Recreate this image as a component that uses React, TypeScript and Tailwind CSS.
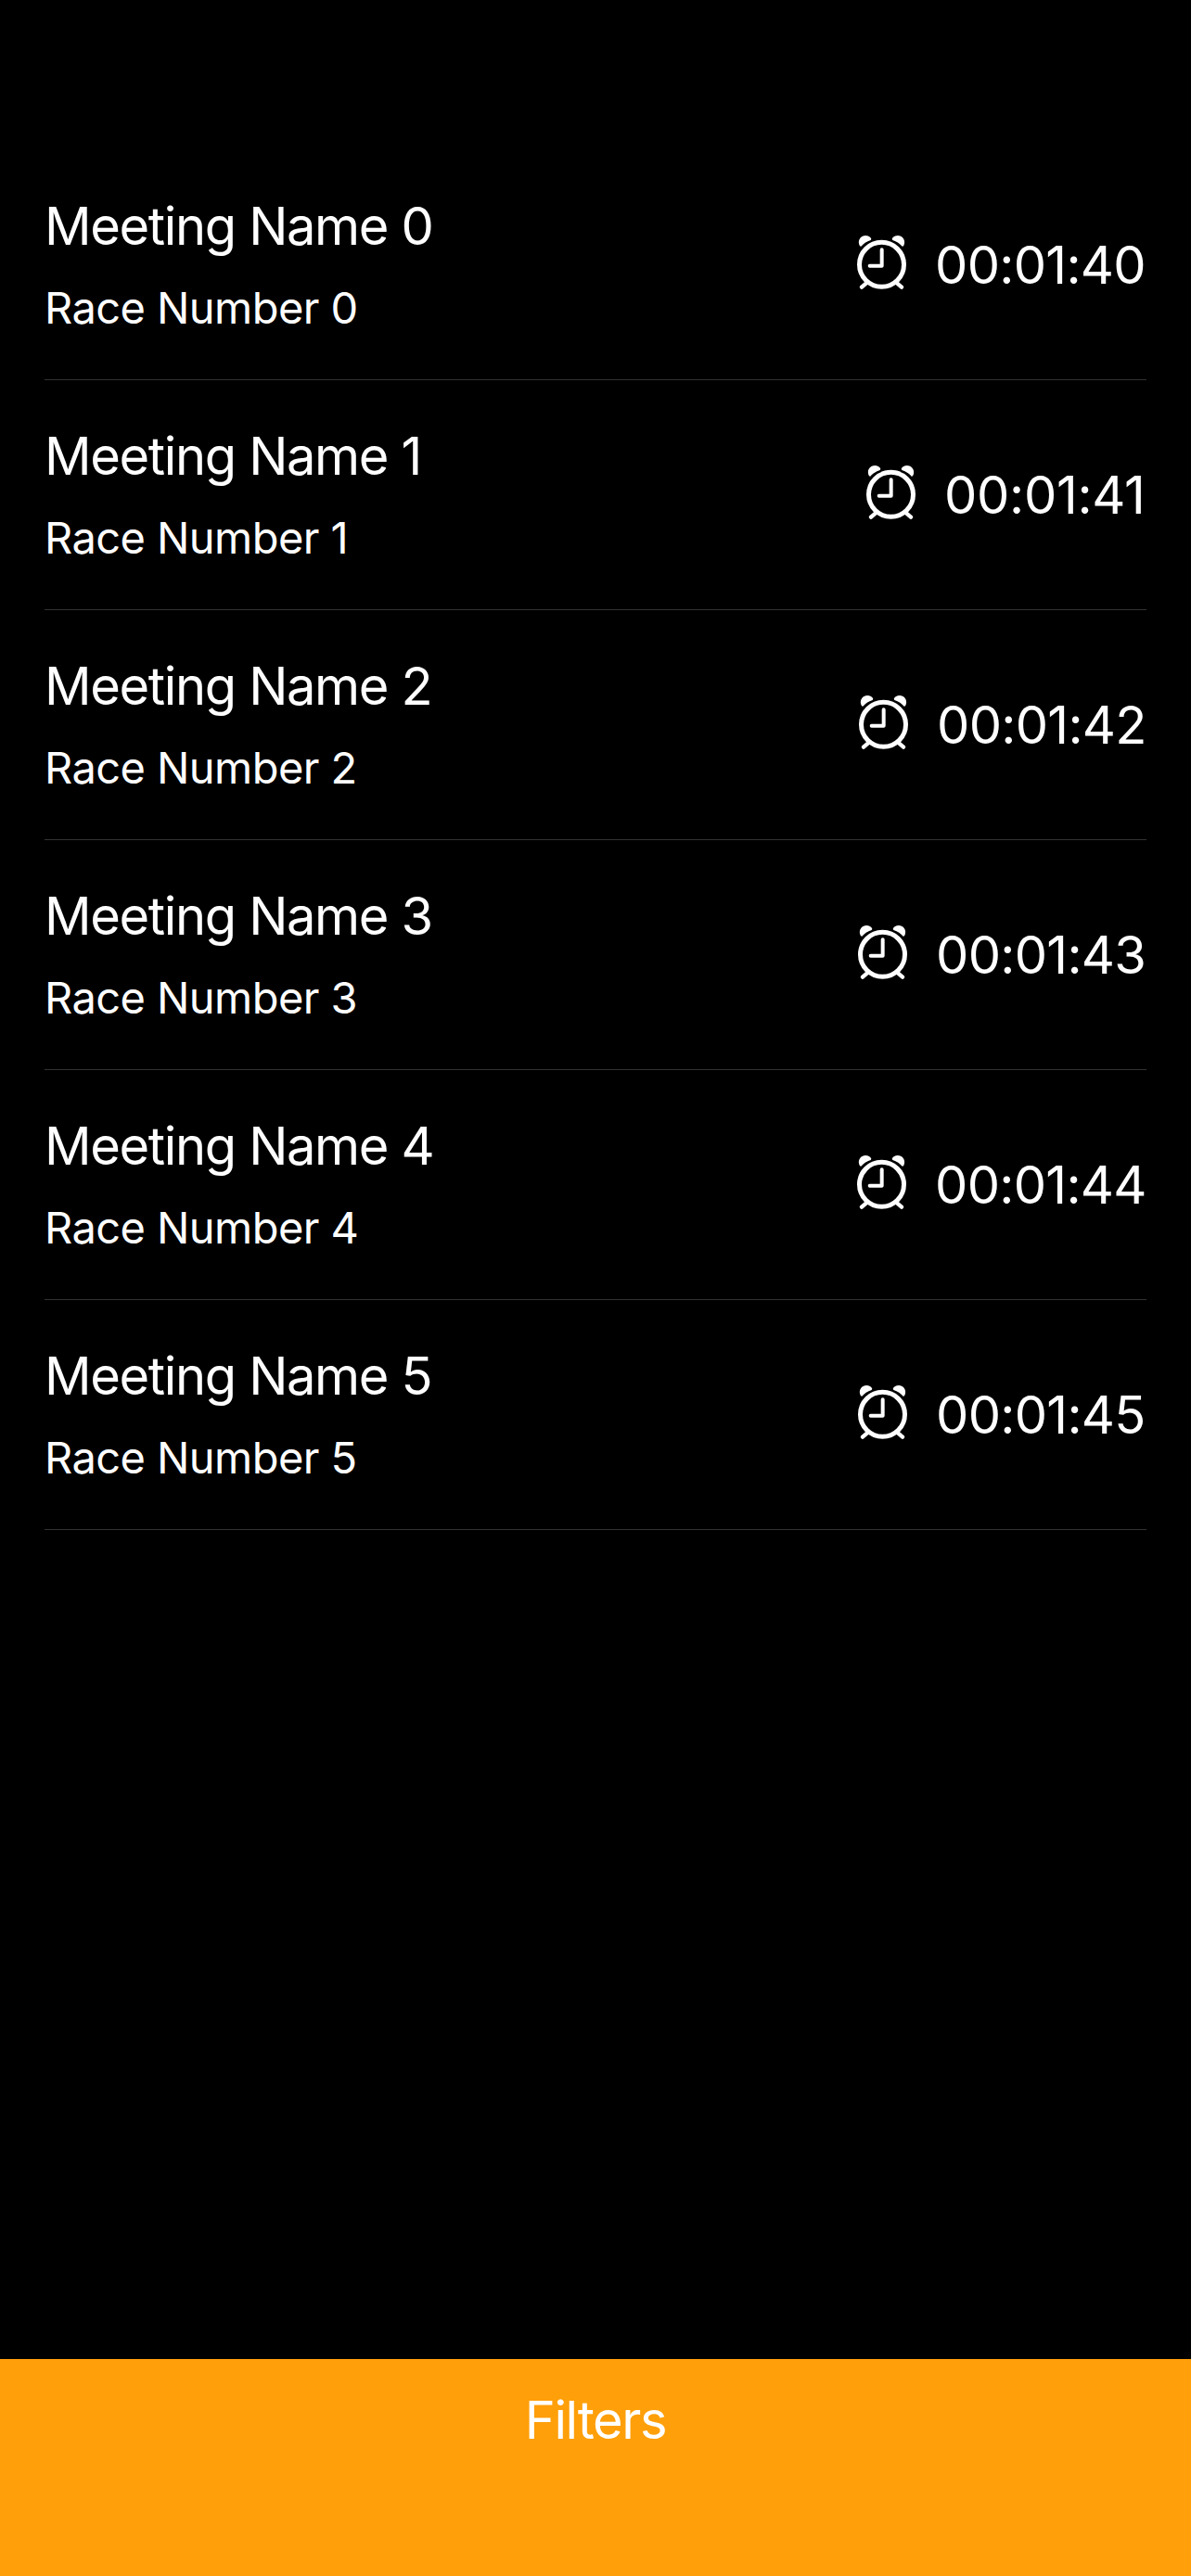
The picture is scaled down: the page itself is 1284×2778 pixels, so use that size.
const races = [
  { id: 0, time: "00:01:40", timeClass: "w-[228px] tracking-[-0.7px]" },
  { id: 1, time: "00:01:41", timeClass: "w-[218px] tracking-[-0.3px]" },
  { id: 2, time: "00:01:42", timeClass: "w-[226px] tracking-[-0.7px]" },
  { id: 3, time: "00:01:43", timeClass: "w-[227px] tracking-[-0.7px]" },
  { id: 4, time: "00:01:44", timeClass: "w-[228px] tracking-[-0.7px]" },
  { id: 5, time: "00:01:45", timeClass: "w-[227px] tracking-[-0.7px]" },
];

function AlarmIcon() {
  return (
    <svg viewBox="42 26 159 174" className="mt-[2px] h-[58px] w-[53px] shrink-0" fill="none" stroke="currentColor" strokeLinecap="round" strokeLinejoin="round">
      <circle cx="121.5" cy="120" r="72" strokeWidth="15" />
      <path d="M122 72V124H83" strokeWidth="12" />
      <path d="M71 181L57 193M172 181L186 193" strokeWidth="13" />
      <path d="M49 56C43 38 57 26 69 26C78 26 85 30 88 37L86 41C73 45 62 53 55 61Q51 62 49 56Z" fill="currentColor" stroke="none" />
      <path d="M194 56C200 38 186 26 174 26C165 26 158 30 155 37L157 41C170 45 181 53 188 61Q192 62 194 56Z" fill="currentColor" stroke="none" />
    </svg>
  );
}

export default function App() {
  return (
    <div className="flex h-[2778px] w-[1284px] flex-col bg-black font-['Inter',sans-serif] text-white">
      <main className="flex-1 px-12 pt-[162px]">
        {races.map((race) => (
          <div key={race.id} className="ml-0 flex h-[248px] justify-between border-b border-[#323235]">
            <div className="pt-12 whitespace-nowrap">
              <h2 className="text-[56px] leading-[68px] tracking-[-1.35px]">Meeting Name {race.id}</h2>
              <p className="mt-[26px] text-[47px] leading-[56px] tracking-[-0.57px]">Race Number {race.id}</p>
            </div>
            <div className="flex items-start gap-[31px] pt-[90px]">
              <AlarmIcon />
              <span className={`text-[56px] leading-[68px] whitespace-nowrap ${race.timeClass}`}>{race.time}</span>
            </div>
          </div>
        ))}
      </main>
      <button className="flex h-[234px] w-full items-start justify-center bg-[#ff9f0a] pt-8 text-[56px] leading-[68px] tracking-[-1.35px]">
        Filters
      </button>
    </div>
  );
}
